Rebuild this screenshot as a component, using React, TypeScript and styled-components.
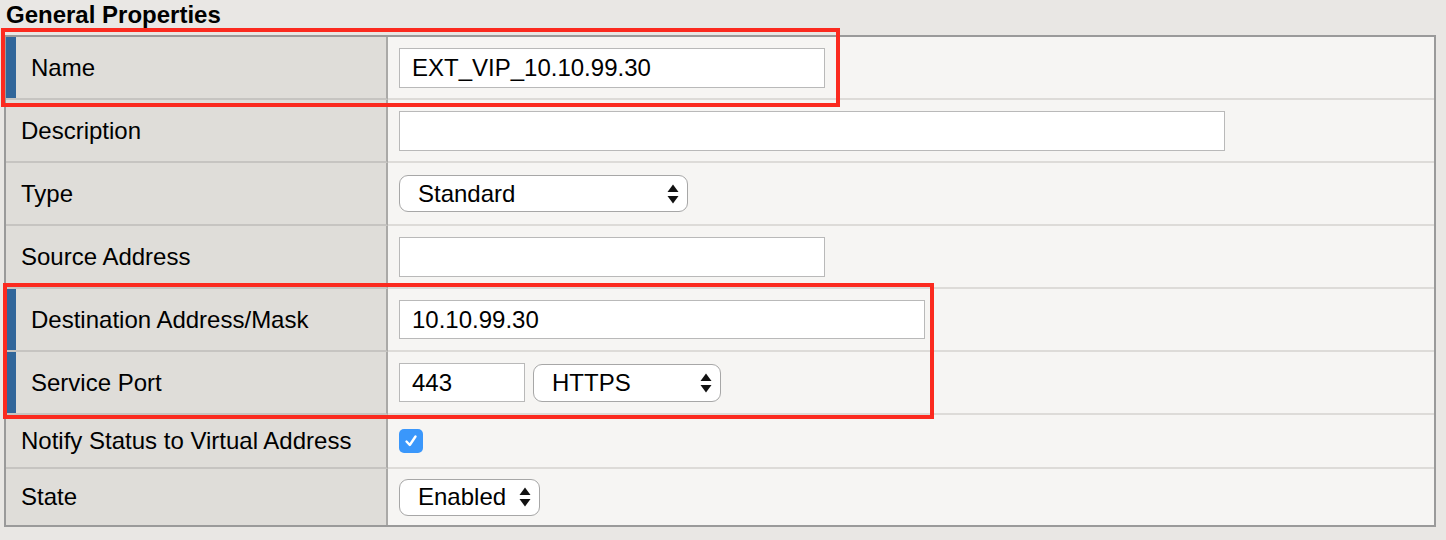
import React from "react";
import styled, { createGlobalStyle } from "styled-components";

const Global = createGlobalStyle`
  html, body { margin: 0; padding: 0; background: #e9e7e4; }
  body { font-family: "Liberation Sans", Arial, Helvetica, sans-serif; color: #000; }
  * { box-sizing: border-box; }
`;

const Page = styled.div`
  position: relative;
  width: 1446px;
  height: 540px;
  padding: 0 10px 0 4px;
  background: #e9e7e4;
`;

const Header = styled.div`
  height: 35px;
  padding: 1px 0 0 2px;
  font-size: 24px;
  line-height: 28px;
  font-weight: bold;
`;

const Table = styled.div`
  border: 2px solid #9a9a9a;
  display: flex;
  flex-direction: column;
`;

const Row = styled.div<{ $h: number; $last?: boolean }>`
  display: grid;
  grid-template-columns: 382px 1fr;
  height: ${(p) => p.$h + (p.$last ? 0 : 2)}px;
`;

const Label = styled.div<{ $required?: boolean; $last?: boolean }>`
  display: flex;
  align-items: center;
  background: #dfddd9;
  border-right: 2px solid #aaa9a7;
  border-bottom: ${(p) => (p.$last ? "none" : "2px solid #c6c4c1")};
  padding-left: ${(p) => (p.$required ? "25px" : "15px")};
  font-size: 24px;
  white-space: nowrap;
  ${(p) => (p.$required ? "box-shadow: inset 10px 0 0 #31669a;" : "")}
`;

const Value = styled.div<{ $last?: boolean }>`
  display: flex;
  align-items: center;
  gap: 8px;
  background: #f6f5f3;
  border-bottom: ${(p) => (p.$last ? "none" : "2px solid #dddbd8")};
  padding-left: 11px;
`;

const TextInput = styled.input<{ $w: number; $h?: number }>`
  width: ${(p) => p.$w}px;
  height: ${(p) => p.$h ?? 40}px;
  border: 1px solid #b9b9b9;
  background: #fff;
  padding: 0 12px;
  font-family: "Liberation Sans", Arial, sans-serif;
  font-size: 24px;
  color: #000;
  outline: none;
  margin: 0;
`;

const Select = styled.div<{ $w: number; $h?: number }>`
  width: ${(p) => p.$w}px;
  height: ${(p) => p.$h ?? 37}px;
  border: 1.5px solid #a7a7a7;
  border-radius: 9px;
  background: #fff;
  display: flex;
  align-items: center;
  justify-content: space-between;
  padding: 0 8px 0 18px;
  font-size: 24px;
`;

const Check = styled.div`
  width: 24px;
  height: 24px;
  border-radius: 5px;
  background: #3a97fb;
  display: flex;
  align-items: center;
  justify-content: center;
`;

const RedBox = styled.div<{ $l: number; $t: number; $w: number; $h: number }>`
  position: absolute;
  left: ${(p) => p.$l}px;
  top: ${(p) => p.$t}px;
  width: ${(p) => p.$w}px;
  height: ${(p) => p.$h}px;
  border: 4.5px solid #fb2a1f;
  pointer-events: none;
`;

const Arrows = () => (
  <svg width="12" height="22" viewBox="0 0 12 22">
    <polygon points="6,1.5 11.5,9 0.5,9" fill="#111" />
    <polygon points="0.5,13 11.5,13 6,20.5" fill="#111" />
  </svg>
);

export default function App() {
  return (
    <Page>
      <Global />
      <Header>General Properties</Header>
      <Table>
        <Row $h={61}>
          <Label $required>Name</Label>
          <Value>
            <TextInput $w={426} readOnly value="EXT_VIP_10.10.99.30" />
          </Value>
        </Row>
        <Row $h={61}>
          <Label>Description</Label>
          <Value>
            <TextInput $w={826} readOnly value="" />
          </Value>
        </Row>
        <Row $h={61}>
          <Label>Type</Label>
          <Value>
            <Select $w={289}>
              <span>Standard</span>
              <Arrows />
            </Select>
          </Value>
        </Row>
        <Row $h={61}>
          <Label>Source Address</Label>
          <Value>
            <TextInput $w={426} readOnly value="" />
          </Value>
        </Row>
        <Row $h={61}>
          <Label $required>Destination Address/Mask</Label>
          <Value>
            <TextInput $w={526} $h={39} readOnly value="10.10.99.30" />
          </Value>
        </Row>
        <Row $h={61}>
          <Label $required>Service Port</Label>
          <Value>
            <TextInput $w={126} $h={39} readOnly value="443" />
            <Select $w={188} $h={38}>
              <span>HTTPS</span>
              <Arrows />
            </Select>
          </Value>
        </Row>
        <Row $h={52}>
          <Label>Notify Status to Virtual Address</Label>
          <Value>
            <Check>
              <svg width="16" height="16" viewBox="0 0 16 16">
                <path d="M3.5 8.5 L6.8 12 L12.5 3.5" fill="none" stroke="#fff" strokeWidth="2.4" strokeLinecap="round" strokeLinejoin="round" />
              </svg>
            </Check>
          </Value>
        </Row>
        <Row $h={56} $last>
          <Label $last>State</Label>
          <Value $last>
            <Select $w={141}>
              <span>Enabled</span>
              <Arrows />
            </Select>
          </Value>
        </Row>
      </Table>
      <RedBox $l={1} $t={28} $w={839} $h={79} />
      <RedBox $l={3} $t={283} $w={931} $h={136} />
    </Page>
  );
}
